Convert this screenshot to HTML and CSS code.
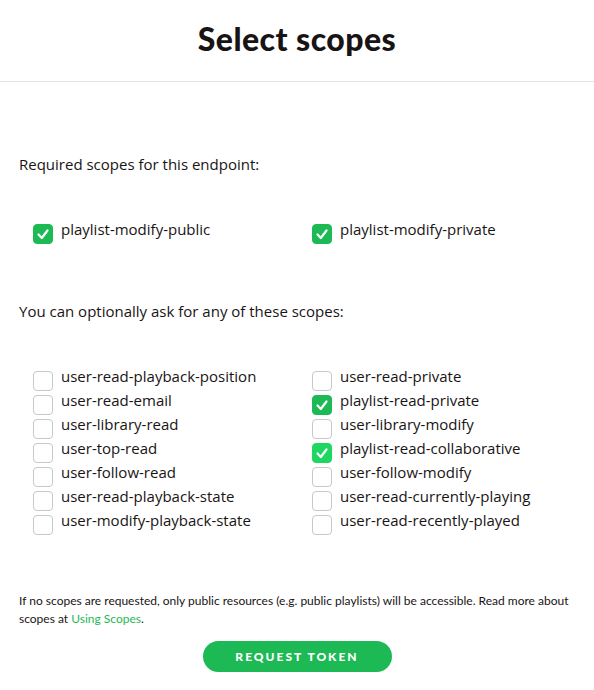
FILE: index.html
```html
<!DOCTYPE html>
<html>
<head>
<meta charset="utf-8">
<link rel="stylesheet" href="styles.css">
</head>
<body>
<header class="header"><h1 class="title">Select scopes</h1></header>
<main class="content">
  <p class="label">Required scopes for this endpoint:</p>
  <div class="grid">
    <div class="row"><span class="box on"><svg viewBox="0 0 20 20"><polyline points="5.5,10.5 8.8,14 14.5,6.5"/></svg></span><span class="name">playlist-modify-public</span></div>
    <div class="row"><span class="box on"><svg viewBox="0 0 20 20"><polyline points="5.5,10.5 8.8,14 14.5,6.5"/></svg></span><span class="name">playlist-modify-private</span></div>
  </div>
  <p class="label">You can optionally ask for any of these scopes:</p>
  <div class="grid">
    <div class="row"><span class="box"></span><span class="name">user-read-playback-position</span></div>
    <div class="row"><span class="box"></span><span class="name">user-read-private</span></div>
    <div class="row"><span class="box"></span><span class="name">user-read-email</span></div>
    <div class="row"><span class="box on"><svg viewBox="0 0 20 20"><polyline points="5.5,10.5 8.8,14 14.5,6.5"/></svg></span><span class="name">playlist-read-private</span></div>
    <div class="row"><span class="box"></span><span class="name">user-library-read</span></div>
    <div class="row"><span class="box"></span><span class="name">user-library-modify</span></div>
    <div class="row"><span class="box"></span><span class="name">user-top-read</span></div>
    <div class="row"><span class="box on light"><svg viewBox="0 0 20 20"><polyline points="5.5,10.5 8.8,14 14.5,6.5"/></svg></span><span class="name">playlist-read-collaborative</span></div>
    <div class="row"><span class="box"></span><span class="name">user-follow-read</span></div>
    <div class="row"><span class="box"></span><span class="name">user-follow-modify</span></div>
    <div class="row"><span class="box"></span><span class="name">user-read-playback-state</span></div>
    <div class="row"><span class="box"></span><span class="name">user-read-currently-playing</span></div>
    <div class="row"><span class="box"></span><span class="name">user-modify-playback-state</span></div>
    <div class="row"><span class="box"></span><span class="name">user-read-recently-played</span></div>
  </div>
  <p class="note">If no scopes are requested, only public resources (e.g. public playlists) will be accessible. Read more about scopes at <a class="link" href="#">Using Scopes</a>.</p>
  <div class="actions"><button class="btn">REQUEST TOKEN</button></div>
</main>
</body>
</html>
```
FILE: styles.css
```css
html, body {
  margin: 0;
  padding: 0;
  background: #fff;
}
body {
  color: #191414;
  font-family: "Open Sans", "Noto Sans", sans-serif;
}
.header {
  height: 81px;
  border-bottom: 1px solid #e4e4e4;
  display: flex;
  align-items: center;
  justify-content: center;
}
.title {
  margin: 0 0 4px 0;
  font-family: "Lato", sans-serif;
  font-weight: 900;
  font-size: 32px;
  line-height: 40px;
  letter-spacing: 0.45px;
  color: #191414;
}
.content {
  padding: 72px 19px 0 19px;
}
.label {
  margin: 0 0 47px 0;
  font-size: 15px;
  line-height: 20px;
}
.grid {
  display: grid;
  grid-template-columns: 279px 1fr;
  padding-left: 14px;
  margin-bottom: 56px;
}
.row {
  display: flex;
  align-items: flex-start;
  height: 24px;
}
.box {
  flex: none;
  box-sizing: border-box;
  width: 20px;
  height: 20px;
  margin-top: 3px;
  margin-right: 8px;
  border: 1px solid #c8c8c8;
  border-radius: 4px;
  background: #fff;
  display: flex;
  align-items: center;
  justify-content: center;
}
.box.on {
  background: #1db954;
  border-color: #1db954;
}
.box.on.light {
  background: #1ed760;
  border-color: #1ed760;
}
.box svg {
  width: 20px;
  height: 20px;
  flex: none;
}
.box polyline {
  fill: none;
  stroke: #fff;
  stroke-width: 2.2;
  stroke-linecap: round;
  stroke-linejoin: round;
}
.name {
  font-size: 15px;
  line-height: 20px;
  margin-top: -2px;
}
.note {
  margin: 0;
  font-family: "Lato", sans-serif;
  font-size: 12px;
  line-height: 18px;
  color: #191414;
}
.link {
  color: #1db954;
  text-decoration: none;
}
.actions {
  display: flex;
  justify-content: center;
  margin-top: 13px;
}
.btn {
  width: 189px;
  height: 31px;
  border: 0;
  border-radius: 16px;
  background: #1db954;
  color: #fff;
  font-family: "Lato", sans-serif;
  font-weight: 900;
  font-size: 12px;
  letter-spacing: 2px;
  padding: 0;
}
```
